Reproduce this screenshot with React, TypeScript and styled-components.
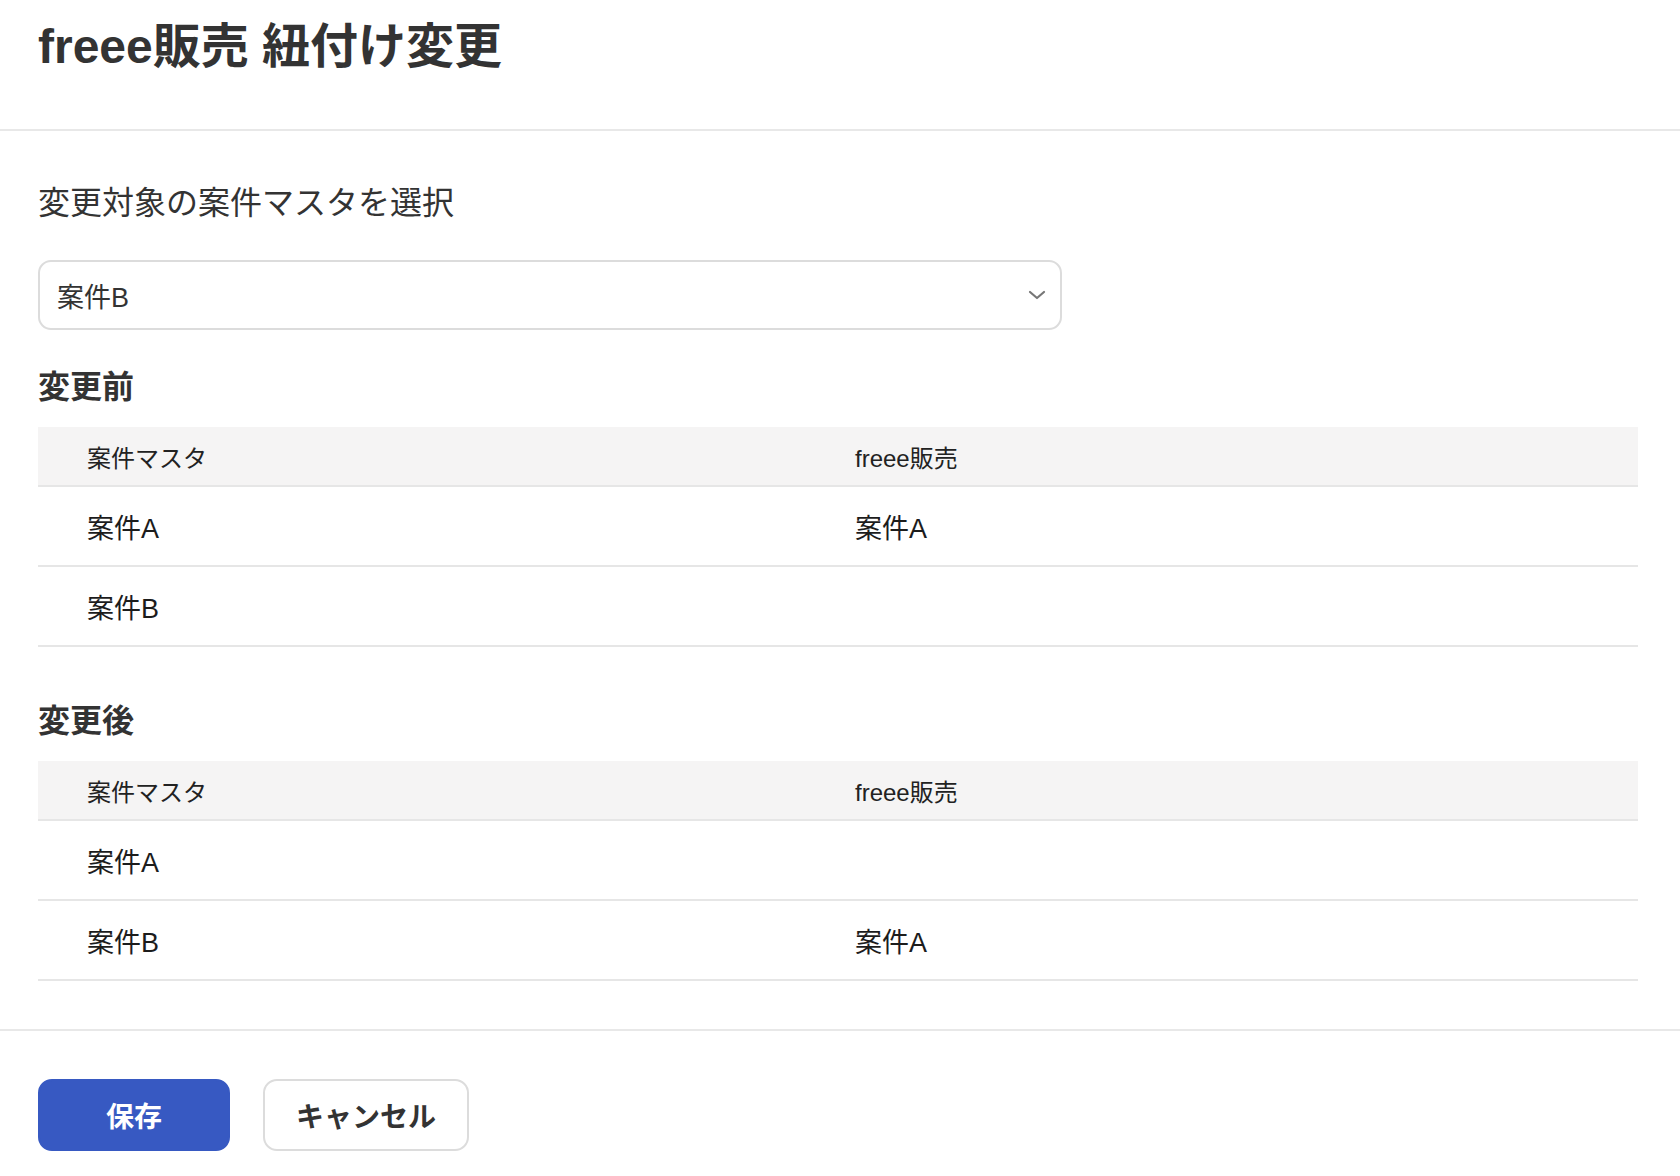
import React from "react";
import styled, { createGlobalStyle } from "styled-components";

const FONT = `"Liberation Sans", "Noto Sans CJK JP", "Noto Sans", sans-serif`;

const GlobalStyle = createGlobalStyle`
  html, body {
    margin: 0;
    padding: 0;
    background: #ffffff;
  }
  body {
    font-family: ${FONT};
    color: #333333;
  }
  * { box-sizing: border-box; }
`;

const Header = styled.header`
  padding: 23px 38px 58px;
  border-bottom: 2px solid #e8e8e8;
`;

const Title = styled.h1`
  margin: 0;
  font-size: 48px;
  line-height: 48px;
  font-weight: 700;
  color: #333333;
`;

const Main = styled.main`
  padding: 56px 42px 48px 38px;
`;

const Lead = styled.p`
  margin: 0 0 41px;
  font-size: 32px;
  line-height: 32px;
  font-weight: 400;
  color: #333333;
`;

const Select = styled.div`
  width: 1024px;
  height: 70px;
  border: 2px solid #dcdcdc;
  border-radius: 13px;
  display: flex;
  align-items: center;
  justify-content: space-between;
  padding: 0 14px 0 17px;
  font-size: 27px;
  color: #333333;
  background: #ffffff;
`;

const SectionTitle = styled.h2<{ $gap: number }>`
  margin: ${(p) => p.$gap}px 0 24px;
  font-size: 32px;
  line-height: 32px;
  font-weight: 700;
  color: #333333;
`;

const Table = styled.div`
  width: 1600px;
`;

const HeadRow = styled.div`
  display: grid;
  grid-template-columns: 768px 1fr;
  align-items: center;
  padding-left: 49px;
  height: 60px;
  background: #f5f4f4;
  border-bottom: 2px solid #e6e6e6;
  font-size: 24px;
  color: #222222;
`;

const Row = styled.div`
  display: grid;
  grid-template-columns: 768px 1fr;
  align-items: center;
  padding-left: 49px;
  height: 80px;
  border-bottom: 2px solid #e6e6e6;
  font-size: 27px;
  color: #1c1c1c;
`;

const Cell = styled.div`
  white-space: nowrap;
`;

const Footer = styled.footer`
  border-top: 2px solid #e8e8e8;
  padding: 48px 38px 25px;
  display: flex;
  gap: 33px;
`;

const Button = styled.button<{ $primary?: boolean }>`
  height: 72px;
  min-width: 192px;
  padding: 0 31px;
  border-radius: 14px;
  font-family: ${FONT};
  font-size: 28px;
  font-weight: 700;
  cursor: pointer;
  border: ${(p) => (p.$primary ? "2px solid #3759c2" : "2px solid #dcdcdc")};
  background: ${(p) => (p.$primary ? "#3759c2" : "#ffffff")};
  color: ${(p) => (p.$primary ? "#ffffff" : "#333333")};
`;

const Chevron = () => (
  <svg width="18" height="10" viewBox="0 0 18 10" fill="none">
    <path d="M2 2 L9 8 L16 2" stroke="#777777" strokeWidth="2.2" strokeLinecap="round" strokeLinejoin="round" />
  </svg>
);

type Pair = [string, string];

const MappingTable = ({ rows }: { rows: Pair[] }) => (
  <Table>
    <HeadRow>
      <Cell>案件マスタ</Cell>
      <Cell>freee販売</Cell>
    </HeadRow>
    {rows.map(([a, b], i) => (
      <Row key={i}>
        <Cell>{a}</Cell>
        <Cell>{b}</Cell>
      </Row>
    ))}
  </Table>
);

export default function App() {
  const before: Pair[] = [
    ["案件A", "案件A"],
    ["案件B", ""],
  ];
  const after: Pair[] = [
    ["案件A", ""],
    ["案件B", "案件A"],
  ];
  return (
    <>
      <GlobalStyle />
      <Header>
        <Title>freee販売 紐付け変更</Title>
      </Header>
      <Main>
        <Lead>変更対象の案件マスタを選択</Lead>
        <Select>
          <span>案件B</span>
          <Chevron />
        </Select>
        <SectionTitle $gap={41}>変更前</SectionTitle>
        <MappingTable rows={before} />
        <SectionTitle $gap={58}>変更後</SectionTitle>
        <MappingTable rows={after} />
      </Main>
      <Footer>
        <Button $primary>保存</Button>
        <Button>キャンセル</Button>
      </Footer>
    </>
  );
}
